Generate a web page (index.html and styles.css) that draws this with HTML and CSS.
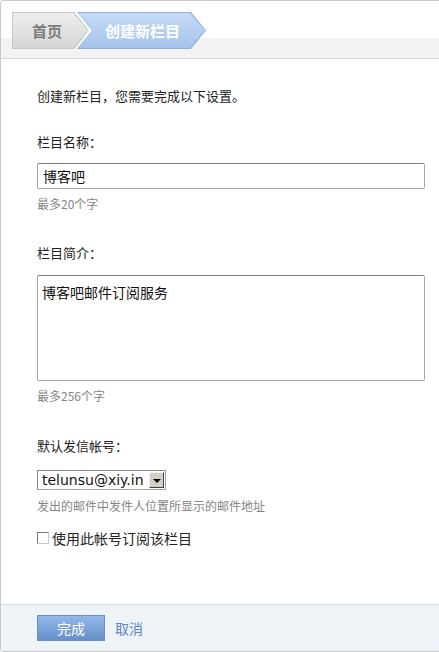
FILE: index.html
```html
<!DOCTYPE html>
<html lang="zh-CN">
<head>
  <meta charset="UTF-8" />
  <meta name="viewport" content="width=device-width, initial-scale=1.0"/>
  <title>创建新栏目</title>
  <link rel="stylesheet" href="styles.css">
</head>
<body>
  <div class="panel">
    <div class="panel-head">
      <div class="crumbs">
        <a class="crumb crumb-home" href="#"><span class="crumb-face">首页</span></a>
        <span class="crumb crumb-current"><span class="crumb-face">创建新栏目</span></span>
      </div>
    </div>

    <form class="panel-body">
      <p class="intro">创建新栏目，您需要完成以下设置。</p>

      <div class="field field-first">
        <label class="field-label" for="name">栏目名称：</label>
        <input class="text-input" id="name" type="text" value="博客吧">
        <p class="hint">最多20个字</p>
      </div>

      <div class="field">
        <label class="field-label" for="desc">栏目简介：</label>
        <textarea class="text-area" id="desc">博客吧邮件订阅服务</textarea>
        <p class="hint">最多256个字</p>
      </div>

      <div class="field field-last">
        <label class="field-label" for="sender">默认发信帐号：</label>
        <div class="select">
          <select id="sender">
            <option>telunsu@xiy.in</option>
          </select>
          <span class="select-btn"></span>
        </div>
        <p class="hint hint-select">发出的邮件中发件人位置所显示的邮件地址</p>
        <label class="check-row">
          <input class="check" type="checkbox">
          <span>使用此帐号订阅该栏目</span>
        </label>
      </div>
    </form>

    <div class="panel-foot">
      <button class="btn-primary" type="button">完成</button>
      <a class="link-cancel" href="#">取消</a>
    </div>
  </div>
</body>
</html>
```

FILE: styles.css
```css
html, body {
  margin: 0;
  padding: 0;
  background: #fff;
}
body {
  font-family: "Noto Sans CJK SC", "DejaVu Sans", sans-serif;
  color: #222;
  font-size: 13px;
}
.panel {
  display: flex;
  flex-direction: column;
  height: 652px;
  box-sizing: border-box;
  border: 1px solid #cbcbcb;
  border-right: none;
  border-radius: 4px 0 0 4px;
  overflow: hidden;
}

/* breadcrumb header */
.panel-head {
  height: 58px;
  padding-top: 11px;
  box-sizing: border-box;
  border-bottom: 1px solid #d9d9d9;
  background: linear-gradient(#fff 0, #fff 37px, #f3f3f3 37px, #f3f3f3 100%);
  padding-left: 11px;
}
.crumbs {
  display: flex;
}
.crumb {
  display: flex;
  height: 37px;
  text-decoration: none;
}
.crumb-face {
  display: flex;
  align-items: center;
  flex: 1;
  margin: 1px;
  font-size: 15px;
  font-weight: bold;
}
.crumb-home {
  width: 77px;
  background: #c6c6c6;
  clip-path: polygon(0 0, calc(100% - 15px) 0, 100% 50%, calc(100% - 15px) 100%, 0 100%);
}
.crumb-home .crumb-face {
  padding-left: 19px;
  color: #7d7d7d;
  background: linear-gradient(#eeeeee, #d6d6d6);
  clip-path: polygon(0 0, calc(100% - 15px) 0, 100% 50%, calc(100% - 15px) 100%, 0 100%);
}
.crumb-current {
  width: 129px;
  margin-left: -12px;
  background: #8fb3e0;
  clip-path: polygon(0 0, calc(100% - 15px) 0, 100% 50%, calc(100% - 15px) 100%, 0 100%, 15px 50%);
}
.crumb-current .crumb-face {
  justify-content: center;
  padding-left: 2px;
  color: #fff;
  background: linear-gradient(#c6dbf6, #a5c3eb);
  clip-path: polygon(0 0, calc(100% - 15px) 0, 100% 50%, calc(100% - 15px) 100%, 0 100%, 15px 50%);
}

/* form body */
.panel-body {
  flex: 1;
  margin: 0;
  padding: 27px 0 0 36px;
}
.intro {
  margin: 0;
  line-height: 20px;
}
.field {
  margin-top: 30px;
}
.field-first {
  margin-top: 26px;
}
.field-last {
  margin-top: 31px;
}
.field-label {
  display: block;
  line-height: 20px;
}
.text-input {
  display: block;
  box-sizing: border-box;
  width: 388px;
  height: 26px;
  margin: 11px 0 0;
  padding: 0 5px;
  border: 1px solid #a9a9a9;
  border-top-color: #7c7c7c;
  border-radius: 2px;
  font-family: inherit;
  font-size: 14px;
  color: #111;
  outline: none;
}
.text-area {
  display: block;
  box-sizing: border-box;
  width: 388px;
  height: 106px;
  margin: 12px 0 0;
  padding: 6px 4px;
  border: 1px solid #a9a9a9;
  border-top-color: #7c7c7c;
  border-radius: 2px;
  font-family: inherit;
  font-size: 14px;
  line-height: 20px;
  color: #111;
  resize: none;
  outline: none;
}
.hint {
  margin: 6px 0 0;
  font-size: 12px;
  line-height: 18px;
  color: #858585;
}
.hint-select {
  margin-top: 7px;
}

.select {
  display: flex;
  align-items: center;
  box-sizing: border-box;
  width: 129px;
  height: 20px;
  margin-top: 14px;
  border: 1px solid #a5a5a5;
  border-top-color: #8a8a8a;
  border-left-color: #8a8a8a;
  background: #fff;
}
.select select {
  flex: 1;
  min-width: 0;
  height: 18px;
  padding: 0 0 0 4px;
  border: 0;
  background: transparent;
  appearance: none;
  -webkit-appearance: none;
  font-family: "DejaVu Sans", sans-serif;
  font-size: 14px;
  color: #111;
  outline: none;
}
.select-btn {
  display: flex;
  align-items: center;
  justify-content: center;
  box-sizing: border-box;
  width: 15px;
  height: 16px;
  margin-right: 1px;
  background: #d4d0c8;
  border: 1px solid;
  border-color: #f4f4f4 #404040 #404040 #f4f4f4;
}
.select-btn::after {
  content: "";
  border-left: 4px solid transparent;
  border-right: 4px solid transparent;
  border-top: 4px solid #000;
  margin-top: 1px;
}

.check-row {
  display: flex;
  align-items: center;
  gap: 3px;
  margin-top: 13px;
  height: 20px;
  font-size: 14px;
}
.check {
  appearance: none;
  -webkit-appearance: none;
  box-sizing: border-box;
  width: 12px;
  height: 12px;
  margin: 0;
  border: 1px solid;
  border-color: #7a7a7a #c8c8c8 #c8c8c8 #7a7a7a;
  background: #fff;
}

/* footer */
.panel-foot {
  display: flex;
  align-items: center;
  gap: 10px;
  height: 46px;
  padding-left: 36px;
  border-top: 1px solid #dcdcdc;
  background: #eef3f8;
}
.btn-primary {
  box-sizing: border-box;
  width: 68px;
  height: 26px;
  padding: 0;
  border: 1px solid #6b8fc3;
  background: linear-gradient(#94b8e9, #6690cb);
  font-family: inherit;
  font-size: 14px;
  color: #fff;
}
.link-cancel {
  font-size: 14px;
  color: #5b86c2;
  text-decoration: none;
}
```
